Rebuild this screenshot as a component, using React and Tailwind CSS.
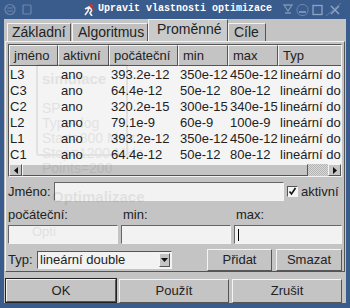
import React from "react";

const cols = [
  { k: "jméno", w: 49 },
  { k: "aktivní", w: 51 },
  { k: "počáteční", w: 69 },
  { k: "min", w: 50 },
  { k: "max", w: 50 },
  { k: "Typ", w: 64 },
];

const rows = [
  ["L3", "ano", "393.2e-12", "350e-12", "450e-12", "lineární double"],
  ["C3", "ano", "64.4e-12", "50e-12", "80e-12", "lineární double"],
  ["C2", "ano", "320.2e-15", "300e-15", "340e-15", "lineární double"],
  ["L2", "ano", "79.1e-9", "60e-9", "100e-9", "lineární double"],
  ["L1", "ano", "393.2e-12", "350e-12", "450e-12", "lineární double"],
  ["C1", "ano", "64.4e-12", "50e-12", "80e-12", "lineární double"],
];

function Btn({ children, className = "", def = false }) {
  return (
    <div
      className={
        "flex items-center justify-center border border-t-[#f4f4f4] border-l-[#f4f4f4] border-r-[#555] border-b-[#555] bg-[#c4c4c4] text-[13px] text-[#222] " +
        (def ? "outline outline-1 outline-[#222] " : "") +
        className
      }
    >
      {children}
    </div>
  );
}

function Input({ className = "", caret = false }) {
  return (
    <div
      className={
        "border border-t-[#666] border-l-[#666] border-r-[#f4f4f4] border-b-[#f4f4f4] bg-[#f2f2f2] relative " +
        className
      }
    >
      {caret && <div className="absolute left-[3px] top-[3px] h-[12px] w-px bg-black" />}
    </div>
  );
}

export default function App() {
  return (
    <div
      className="relative w-[350px] h-[308px] overflow-hidden bg-[#3a5c8d] flex flex-col"
      style={{ fontFamily: '"Liberation Sans", Arial, sans-serif' }}
    >
      {/* title bar */}
      <div className="h-[19px] flex items-center relative shrink-0">
        <svg className="absolute left-[4px] top-[3px]" width="30" height="13" viewBox="0 0 30 13">
          <circle cx="6" cy="6.5" r="5" fill="none" stroke="#6c86ad" strokeWidth="1.2" />
          <path d="M3 5h6M3 8h6" stroke="#6c86ad" strokeWidth="1" />
          <rect x="19" y="2" width="8" height="9" rx="1" fill="none" stroke="#6c86ad" strokeWidth="1.2" />
        </svg>
        <svg className="absolute left-[83px] top-[3px]" width="13" height="13" viewBox="0 0 13 13">
          <circle cx="8" cy="3" r="2" fill="#c33" />
          <path d="M2 6l4-2 3 3-2 3 2 3M6 4l-1 4-3 4" stroke="#f2f2f2" strokeWidth="1.6" fill="none" />
          <path d="M9 7l3-1" stroke="#c33" strokeWidth="1.5" />
        </svg>
        <div
          className="absolute left-[98px] top-[3px] text-[10px] leading-[12px] font-bold text-white whitespace-nowrap"
          style={{ fontFamily: '"Liberation Mono", "DejaVu Sans Mono", monospace' }}
        >
          Upravit vlastnosti optimizace
        </div>
        <svg className="absolute left-[282px] top-[3px]" width="64" height="14" viewBox="0 0 64 14">
          <path d="M2 2h8l-4 6z M3 10h6" stroke="#7d93b5" strokeWidth="1.3" fill="none" />
          <rect x="15" y="1.5" width="11" height="11" rx="5" fill="none" stroke="#6c86ad" />
          <path d="M17 9h7" stroke="#8fa3c2" strokeWidth="1.5" />
          <rect x="31" y="2.5" width="9" height="9" fill="none" stroke="#8fa3c2" strokeWidth="1.3" />
          <path d="M49 3l8 8M57 3l-8 8" stroke="#8fa3c2" strokeWidth="1.5" />
          <path d="M44 13l15-13" stroke="#6c86ad" strokeWidth="0.8" />
        </svg>
      </div>

      {/* body */}
      <div className="mx-[4px] flex-1 bg-[#c4c4c4] flex flex-col">
        {/* tabs */}
        <div className="flex items-end h-[22px] pl-[3px] text-[14px] text-[#222] shrink-0">
          <div className="h-[18px] w-[64px] flex items-center pl-[4px] border border-b-0 border-t-[#f2f2f2] border-l-[#f2f2f2] border-r-[#555] bg-[#c0c0c0]">
            Základní
          </div>
          <div className="h-[18px] w-[76px] ml-[1px] flex items-center pl-[5px] border border-b-0 border-t-[#f2f2f2] border-l-[#f2f2f2] border-r-[#555] bg-[#c0c0c0]">
            Algoritmus
          </div>
          <div className="h-[22px] w-[80px] flex items-center pl-[8px] pb-[2px] border-l border-t border-r border-t-[#f2f2f2] border-l-[#f2f2f2] border-r-[#555] bg-[#cacaca]">
            Proměnné
          </div>
          <div className="h-[18px] w-[38px] flex items-center pl-[5px] border border-b-0 border-t-[#f2f2f2] border-l-[#f2f2f2] border-r-[#555] bg-[#c0c0c0]">
            Cíle
          </div>
        </div>

        {/* panel */}
        <div className="mx-[1px] h-[231px] border border-t-[#f2f2f2] border-l-[#f2f2f2] border-r-[#555] border-b-[#555] flex flex-col px-[2px] pt-[2px] text-[13px] text-[#222]">
          {/* table */}
          <div className="h-[135px] border border-t-[#555] border-l-[#555] border-r-[#f2f2f2] border-b-[#f2f2f2] bg-[#f4f4f4] flex flex-col overflow-hidden">
            <div className="flex h-[21px] shrink-0 bg-[#c4c4c4]">
              {cols.map((c) => (
                <div
                  key={c.k}
                  style={{ width: c.w }}
                  className="shrink-0 flex items-center pl-[4px] border border-t-[#f4f4f4] border-l-[#f4f4f4] border-r-[#555] border-b-[#555]"
                >
                  {c.k}
                </div>
              ))}
            </div>
            <div className="flex-1 flex flex-col pt-[1px]">
              {rows.map((r, i) => (
                <div key={i} className="flex h-[16px] leading-[16px] shrink-0">
                  {r.map((v, j) => (
                    <div
                      key={j}
                      style={{ width: cols[j].w }}
                      className={
                        "shrink-0 overflow-hidden whitespace-nowrap " +
                        (j === 0 ? "pl-[1px]" : j === 1 ? "pl-[3px]" : "pl-[2px]")
                      }
                    >
                      {v}
                    </div>
                  ))}
                </div>
              ))}
            </div>
            {/* scrollbar */}
            <div className="h-[12px] shrink-0 flex bg-[#c4c4c4]">
              <div className="w-[13px] flex items-center justify-center border border-t-[#f4f4f4] border-l-[#f4f4f4] border-r-[#555] border-b-[#555]">
                <svg width="4" height="7" viewBox="0 0 4 7"><path d="M4 0v7L0 3.5z" fill="#111" /></svg>
              </div>
              <div className="w-[286px] border border-t-[#f4f4f4] border-l-[#f4f4f4] border-r-[#555] border-b-[#555]" />
              <div
                className="flex-1"
                style={{
                  backgroundImage:
                    "repeating-conic-gradient(#d8d8d8 0% 25%, #b4b4b4 0% 50%)",
                  backgroundSize: "2px 2px",
                }}
              />
              <div className="w-[13px] flex items-center justify-center border border-t-[#f4f4f4] border-l-[#f4f4f4] border-r-[#555] border-b-[#555]">
                <svg width="4" height="7" viewBox="0 0 4 7"><path d="M0 0v7L4 3.5z" fill="#111" /></svg>
              </div>
            </div>
          </div>

          {/* Jméno */}
          <div className="flex items-center h-[19px] mt-[5px]">
            <span className="w-[46px] shrink-0">Jméno:</span>
            <Input className="w-[230px] h-[19px]" />
            <div className="ml-[3px] w-[11px] h-[11px] border border-t-[#555] border-l-[#555] border-r-[#f4f4f4] border-b-[#f4f4f4] bg-[#f4f4f4] flex items-center justify-center">
              <svg width="9" height="9" viewBox="0 0 9 9">
                <path d="M1.5 4.5l2 2.5 4-6" stroke="#111" strokeWidth="1.6" fill="none" />
              </svg>
            </div>
            <span className="ml-[3px]">aktivní</span>
          </div>

          {/* labels */}
          <div className="flex h-[16px] mt-[6px] leading-[16px]">
            <span className="w-[113px]">počáteční:</span>
            <span className="w-[113px] pl-[2px]">min:</span>
            <span className="pl-[2px]">max:</span>
          </div>
          <div className="flex gap-[3px] h-[19px] mt-[2px]">
            <Input className="w-[110px] h-[19px]" />
            <Input className="w-[110px] h-[19px]" />
            <Input className="flex-1 h-[19px]" caret />
          </div>

          {/* Typ */}
          <div className="flex items-center mt-[5px] h-[22px]">
            <span className="w-[29px] shrink-0">Typ:</span>
            <div className="w-[135px] h-[18px] border border-t-[#555] border-l-[#555] border-r-[#f4f4f4] border-b-[#f4f4f4] bg-[#f2f2f2] flex items-center">
              <span className="flex-1 pl-[2px] leading-[16px]">lineární double</span>
              <div className="w-[11px] h-[14px] mr-[1px] bg-[#c4c4c4] border border-t-[#f4f4f4] border-l-[#f4f4f4] border-r-[#555] border-b-[#555] flex items-center justify-center">
                <svg width="7" height="4" viewBox="0 0 7 4"><path d="M0 0h7L3.5 4z" fill="#111" /></svg>
              </div>
            </div>
            <div className="flex-1" />
            <Btn className="w-[65px] h-[22px]">Přidat</Btn>
            <Btn className="w-[66px] h-[22px] ml-[4px]">Smazat</Btn>
          </div>
        </div>

        {/* bottom buttons */}
        <div className="flex gap-[3px] px-[2px] mt-[7px]">
          <Btn def className="w-[110px] h-[23px]">OK</Btn>
          <Btn className="w-[110px] h-[24px]">Použít</Btn>
          <Btn className="w-[110px] h-[24px]">Zrušit</Btn>
        </div>
      </div>
      <div className="h-[5px] shrink-0" />

      {/* ghost text from window behind (semi-transparent window) */}
      <div className="absolute inset-0 pointer-events-none text-[#000] opacity-[0.07]">
        <div className="absolute left-[36px] top-[64px] w-[92px] h-[92px] border-2 border-[#000] rounded-[3px]" />
        <div className="absolute left-[42px] top-[68px] text-[15px] font-bold">simulace</div>
        <div className="absolute left-[42px] top-[98px] text-[14px]">SP</div>
        <div className="absolute left-[42px] top-[113px] text-[14px]">Type=log</div>
        <div className="absolute left-[42px] top-[128px] text-[14px]">Start=800 MHz</div>
        <div className="absolute left-[42px] top-[143px] text-[14px]">Stop=1200 MHz</div>
        <div className="absolute left-[42px] top-[158px] text-[14px]">Points=200</div>
        <div className="absolute left-[52px] top-[186px] text-[15px] font-bold">Optimalizace</div>
        <div className="absolute left-[32px] top-[222px] text-[13px]">Opti</div>
      </div>
    </div>
  );
}
